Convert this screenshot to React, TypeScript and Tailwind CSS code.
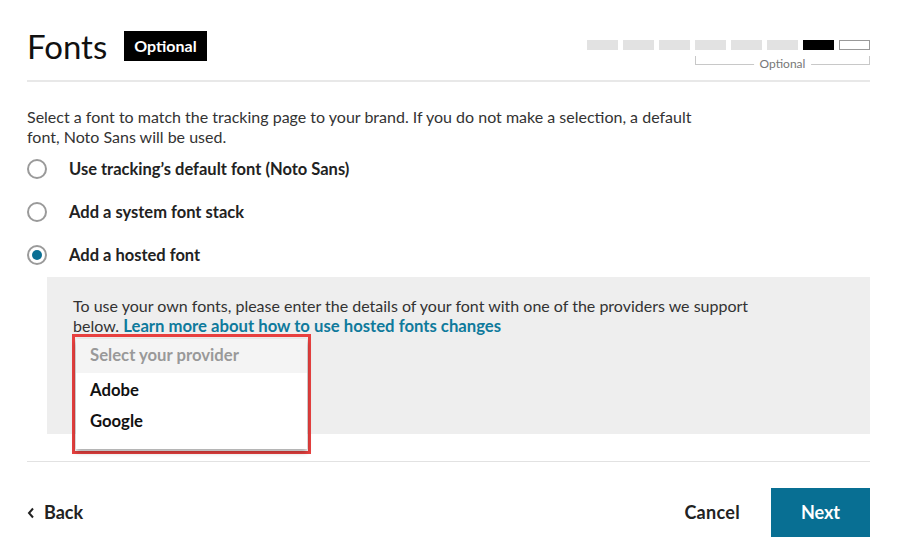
import React from 'react';

const font = { fontFamily: 'Lato, "Open Sans", sans-serif' };

function Radio({ label, checked }: { label: string; checked?: boolean }) {
  return (
    <div className="flex items-center h-[20px]">
      <span className="w-[20px] h-[20px] rounded-full border-2 border-[#9a9a9a] bg-white flex items-center justify-center">
        {checked && <span className="w-[10px] h-[10px] rounded-full bg-[#0a6f94]"></span>}
      </span>
      <span className="ml-[22px] text-[16.5px] font-bold text-[#222]">{label}</span>
    </div>
  );
}

export default function App() {
  const steps = [0, 1, 2, 3, 4, 5, 6, 7];
  return (
    <div className="w-[903px] h-[555px] bg-white pl-[27px] pr-[33px] pt-[28px] text-[#333]" style={font}>
      {/* header */}
      <div className="flex items-start justify-between h-[54px] border-b-2 border-[#e8e8e8]">
        <div className="flex items-center gap-[17px]">
          <h1 className="text-[33px] leading-[36px] text-[#111]">Fonts</h1>
          <span className="bg-black text-white text-[16px] font-bold px-[10px] h-[30px] flex items-center">Optional</span>
        </div>
        <div className="flex flex-col items-end pt-[12px]">
          <div className="flex gap-[5px]">
            {steps.map((i) => (
              <span
                key={i}
                className={
                  i === 6
                    ? 'w-[31px] h-[10px] bg-black'
                    : i === 7
                    ? 'w-[31px] h-[10px] border border-[#999] bg-white'
                    : 'w-[31px] h-[10px] bg-[#e2e2e2]'
                }
              ></span>
            ))}
          </div>
          <div className="w-[175px] h-[9px] mt-[6px] border-x border-b border-[#c8c8c8] relative">
            <span className="absolute left-1/2 -translate-x-1/2 top-[1px] bg-white px-[6px] text-[12px] leading-[14px] text-[#777]">Optional</span>
          </div>
        </div>
      </div>

      {/* body */}
      <p className="mt-[25px] text-[16px] leading-[20px] text-[#333] w-[700px]">
        Select a font to match the tracking page to your brand. If you do not make a selection, a default font, Noto Sans will be used.
      </p>
      <div className="mt-[12px] flex flex-col gap-[23px]">
        <Radio label="Use tracking’s default font (Noto Sans)" />
        <Radio label="Add a system font stack" />
        <Radio label="Add a hosted font" checked />
      </div>

      <div className="ml-[20px] mt-[12px] h-[157px] bg-[#eeeeee] pl-[26px] pt-[19px] relative">
        <p className="text-[16px] leading-[20px] text-[#333] w-[715px]">
          To use your own fonts, please enter the details of your font with one of the providers we support below.{' '}
          <a className="text-[#0f7a9c] font-bold text-[16.7px]">Learn more about how to use hosted fonts changes</a>
        </p>
        <div className="absolute left-[25px] top-[57px] w-[239px] h-[120px] border-[3px] border-[#e8403f]">
          <div className="bg-white h-[110px] mx-[1px] mt-[2px] shadow-[0_3px_5px_rgba(0,0,0,0.35)] text-[16.7px]">
            <div className="h-[34px] bg-[#f4f4f4] px-[14px] flex items-center text-[#999] font-bold">Select your provider</div>
            <div className="h-[34px] pt-[2px] px-[14px] flex items-center text-[#111] font-bold">Adobe</div>
            <div className="h-[30px] px-[14px] flex items-center text-[#111] font-bold">Google</div>
          </div>
        </div>
      </div>

      <div className="mt-[27px] border-t border-[#e2e2e2] flex items-center justify-between pt-[26px]">
        <button className="flex items-center gap-[9px] text-[18px] text-[#222] font-bold">
          <svg width="8" height="12" viewBox="0 0 8 12" fill="none">
            <path d="M6 1.5L2 6l4 4.5" stroke="#222" strokeWidth="2" />
          </svg>
          Back
        </button>
        <div className="flex items-center">
          <button className="text-[18px] text-[#222] font-bold mr-[31px] tracking-[0.3px]">Cancel</button>
          <button className="w-[99px] h-[49px] bg-[#086f93] text-white text-[18px] font-bold">Next</button>
        </div>
      </div>
    </div>
  );
}
